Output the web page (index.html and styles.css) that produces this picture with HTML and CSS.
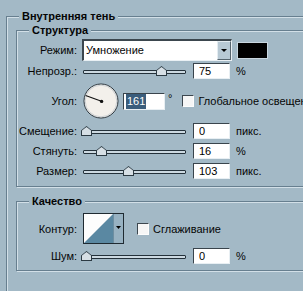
FILE: index.html
```html
<!DOCTYPE html>
<html lang="ru">
<head>
  <meta charset="UTF-8" />
  <title>Внутренняя тень</title>
  <link rel="stylesheet" href="styles.css">
</head>
<body>
  <div class="group outer">
    <h3 class="group-title">Внутренняя тень</h3>

    <div class="group structure">
      <h3 class="group-title">Структура</h3>

      <div class="row row-mode">
        <label class="lbl">Режим:</label>
        <div class="select">
          <span class="select-text">Умножение</span>
          <span class="drop"><i class="arrow"></i></span>
        </div>
        <span class="swatch"></span>
      </div>

      <div class="row">
        <label class="lbl">Непрозр.:</label>
        <div class="slider"><div class="track"></div><span class="thumb" style="left: 75px"></span></div>
        <input class="field" type="text" value="75" readonly>
        <span class="unit">%</span>
      </div>

      <div class="row row-angle">
        <label class="lbl">Угол:</label>
        <svg class="dial" width="36" height="36" viewBox="0 0 36 36">
          <circle cx="18" cy="18" r="17" fill="#f3f0eb" stroke="#2b363e" stroke-width="1"/>
          <circle cx="18" cy="18" r="15.8" fill="none" stroke="#cfd3d6" stroke-width="1"/>
          <line x1="2.6" y1="12.4" x2="18.5" y2="18.3" stroke="#111" stroke-width="1.1"/>
          <circle cx="18.6" cy="18.4" r="1.7" fill="#111"/>
        </svg>
        <span class="field field-angle"><span class="sel">161</span></span>
        <span class="deg">°</span>
        <span class="check"></span>
        <span class="check-text">Глобальное освещение</span>
      </div>

      <div class="row">
        <label class="lbl">Смещение:</label>
        <div class="slider"><div class="track"></div><span class="thumb" style="left: 0px"></span></div>
        <input class="field" type="text" value="0" readonly>
        <span class="unit">пикс.</span>
      </div>

      <div class="row">
        <label class="lbl">Стянуть:</label>
        <div class="slider"><div class="track"></div><span class="thumb" style="left: 15px"></span></div>
        <input class="field" type="text" value="16" readonly>
        <span class="unit">%</span>
      </div>

      <div class="row">
        <label class="lbl">Размер:</label>
        <div class="slider"><div class="track"></div><span class="thumb" style="left: 42px"></span></div>
        <input class="field" type="text" value="103" readonly>
        <span class="unit">пикс.</span>
      </div>
    </div>

    <div class="group quality">
      <h3 class="group-title">Качество</h3>

      <div class="row row-contour">
        <label class="lbl">Контур:</label>
        <svg class="contour" width="41" height="31" viewBox="0 0 41 31">
          <rect x="0.5" y="0.5" width="40" height="30" fill="#fdfdfd" stroke="#1f2a31"/>
          <polygon points="1,30 30,1 30,30" fill="#5a88a2"/>
          <rect x="30" y="1" width="10" height="29" fill="#98b2c2"/>
          <line x1="30.5" y1="1" x2="30.5" y2="30" stroke="#6e8ea1"/>
          <polygon points="33,13 38,13 35.5,16" fill="#000"/>
        </svg>
        <span class="check check-aa"></span>
        <span class="check-text">Сглаживание</span>
      </div>

      <div class="row">
        <label class="lbl">Шум:</label>
        <div class="slider"><div class="track"></div><span class="thumb" style="left: 0px"></span></div>
        <input class="field" type="text" value="0" readonly>
        <span class="unit">%</span>
      </div>
    </div>
  </div>
</body>
</html>
```

FILE: styles.css
```css
html, body {
  margin: 0;
  overflow: hidden;
}

body {
  width: 303px;
  height: 291px;
  background: #a3b9c6;
  font-family: "Liberation Sans", Arial, sans-serif;
  font-size: 11px;
  color: #050505;
}

.group {
  border: 1px solid #677f8f;
  box-shadow: inset 1px 1px 0 #d2dfe7, 1px 1px 0 #d2dfe7;
}

.group-title {
  width: fit-content;
  margin: -7px 0 0 12px;
  padding: 0 3px;
  background: #a3b9c6;
  font-size: 11px;
  font-weight: bold;
  line-height: 13px;
}

.outer {
  width: 340px;
  height: 320px;
  margin: 16px 0 0 6px;
}

.structure {
  margin: 7px 0 0 9px;
  padding-bottom: 5px;
}

.quality {
  margin: 14px 0 0 9px;
  padding-bottom: 4px;
}

.row {
  display: flex;
  align-items: center;
  height: 20px;
}

.lbl {
  flex-shrink: 0;
  width: 60px;
  margin-right: 5px;
  text-align: right;
}

/* режим наложения */
.row-mode {
  height: 22px;
  margin-top: 2px;
}

.select {
  display: flex;
  box-sizing: border-box;
  width: 150px;
  height: 22px;
  background: #fff;
  border-style: solid;
  border-width: 2px 1px 1px 2px;
  border-color: #3b464e #e9f0f4 #e9f0f4 #3b464e;
}

.select-text {
  flex: 1;
  padding-left: 2px;
  line-height: 19px;
}

.drop {
  display: flex;
  align-items: center;
  justify-content: center;
  box-sizing: border-box;
  width: 14px;
  background: #b8c9d4;
  border: 1px solid;
  border-color: #e4ecf1 #56646d #56646d #e4ecf1;
}

.arrow {
  width: 0;
  height: 0;
  border-left: 3px solid transparent;
  border-right: 3px solid transparent;
  border-top: 3px solid #000;
}

.swatch {
  box-sizing: border-box;
  width: 31px;
  height: 17px;
  margin-left: 5px;
  background: #000;
  border: 1px solid #c9d7e0;
}

/* слайдеры */
.slider {
  position: relative;
  flex-shrink: 0;
  width: 104px;
  height: 20px;
}

.track {
  box-sizing: border-box;
  height: 4px;
  margin: 9px 0 0 1px;
  background: #ccd9e1;
  border: 1px solid #24313a;
  border-radius: 1px;
}

.thumb {
  position: absolute;
  top: 5px;
  margin-left: -1px;
  width: 11px;
  height: 10px;
  background: #2c3a43;
  clip-path: polygon(0 100%, 0 45%, 50% 0, 100% 45%, 100% 100%);
}

.thumb::after {
  content: "";
  position: absolute;
  left: 1px;
  top: 1px;
  right: 1px;
  bottom: 1px;
  background: #d6dfe5;
  clip-path: polygon(0 100%, 0 45%, 50% 0, 100% 45%, 100% 100%);
}

.field {
  box-sizing: border-box;
  flex-shrink: 0;
  width: 37px;
  height: 16px;
  margin: 0 0 0 7px;
  padding: 0 0 0 5px;
  background: #fff;
  border: 1px solid;
  border-color: #39444c #e8eff3 #e8eff3 #39444c;
  font-family: "Liberation Sans", Arial, sans-serif;
  font-size: 11px;
  color: #000;
  line-height: 14px;
  outline: none;
}

.unit {
  margin-left: 6px;
}

/* угол */
.row-angle {
  height: 40px;
}

.dial {
  flex-shrink: 0;
  margin-left: 1px;
}

.field-angle {
  width: 42px;
  height: 17px;
  margin-left: 4px;
  padding-left: 2px;
  line-height: 15px;
}

.sel {
  display: inline-block;
  padding: 0 1px;
  background: #3a5d7c;
  color: #fff;
}

.deg {
  margin-left: 3px;
  margin-top: -6px;
}

.check {
  box-sizing: border-box;
  flex-shrink: 0;
  width: 12px;
  height: 12px;
  margin-left: 10px;
  background: #f6f6f6;
  border: 1px solid;
  border-color: #3c474f #fdfdfd #fdfdfd #3c474f;
}

.check-text {
  margin-left: 4px;
  white-space: nowrap;
}

/* качество */
.row-contour {
  height: 35px;
  margin-top: 3px;
}

.contour {
  flex-shrink: 0;
  margin-left: 1px;
}

.check-aa {
  margin-left: 13px;
}
```
